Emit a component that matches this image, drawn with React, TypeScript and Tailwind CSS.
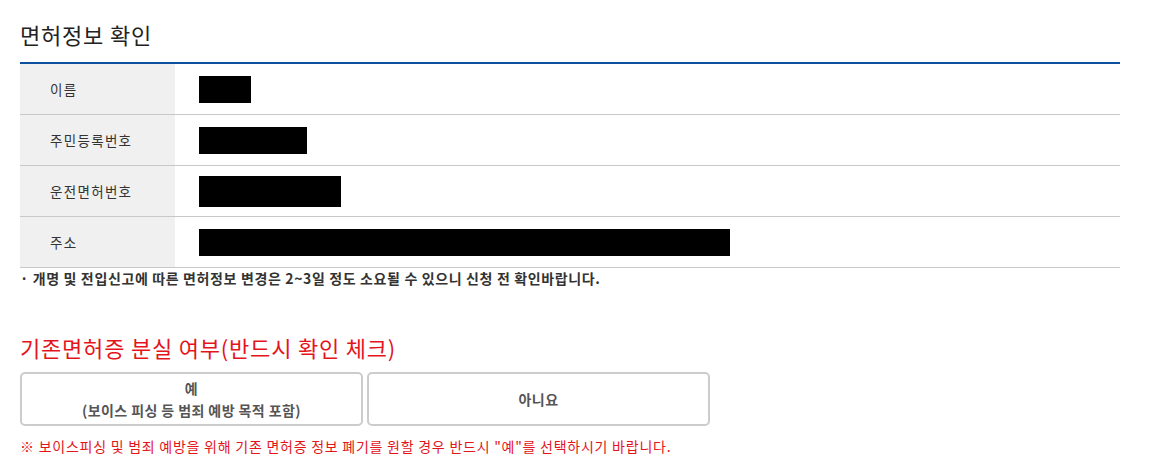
import React from "react";

const font = { fontFamily: '"Malgun Gothic", "Noto Sans CJK KR", "Noto Sans", sans-serif' };

const rows: { label: string; w: number; h: number }[] = [
  { label: "이름", w: 52, h: 27 },
  { label: "주민등록번호", w: 108, h: 27 },
  { label: "운전면허번호", w: 142, h: 31 },
  { label: "주소", w: 531, h: 27 },
];

export default function App() {
  return (
    <div className="w-[1154px] h-[473px] bg-white overflow-hidden" style={font}>
      <div className="ml-[20px] w-[1100px]">
        <h2 className="pt-[19px] pb-[13px] text-[22px] leading-[30px] text-[#222] font-normal tracking-[0.8px]">
          면허정보 확인
        </h2>
        <div className="border-t-2 border-[#0f4fa0]">
          {rows.map((r) => (
            <div key={r.label} className="flex h-[51px] border-b border-[#c8c8c8]">
              <div className="w-[155px] bg-[#f0f0f0] flex items-center pl-[30px] text-[13.5px] text-[#333] tracking-[1.3px]">
                {r.label}
              </div>
              <div className="flex-1 flex items-center pl-[24px]">
                <div className="bg-black" style={{ width: r.w, height: r.h }} />
              </div>
            </div>
          ))}
        </div>
        <p className="text-[14px] leading-[20px] font-bold text-[#333] tracking-[0.63px]">
          · 개명 및 전입신고에 따른 면허정보 변경은 2~3일 정도 소요될 수 있으니 신청 전 확인바랍니다.
        </p>
        <h3 className="mt-[44px] text-[22px] leading-[30px] text-[#e4141b] font-normal tracking-[0.8px]">
          기존면허증 분실 여부(반드시 확인 체크)
        </h3>
        <div className="mt-[10px] flex gap-[4px]">
          <button className="w-[343px] h-[54px] border-2 border-[#cccccc] rounded-[5px] bg-white flex flex-col items-center justify-center text-[14px] leading-[22px] font-bold text-[#555] tracking-[0.4px]">
            <span>예</span>
            <span>(보이스 피싱 등 범죄 예방 목적 포함)</span>
          </button>
          <button className="w-[343px] h-[54px] border-2 border-[#cccccc] rounded-[5px] bg-white flex items-center justify-center text-[14px] font-bold text-[#555] tracking-[0.4px]">
            아니요
          </button>
        </div>
        <p className="mt-[10px] text-[14px] leading-[20px] text-[#e4141b] tracking-[0.75px]">
          ※ 보이스피싱 및 범죄 예방을 위해 기존 면허증 정보 폐기를 원할 경우 반드시 "예"를 선택하시기 바랍니다.
        </p>
      </div>
    </div>
  );
}
